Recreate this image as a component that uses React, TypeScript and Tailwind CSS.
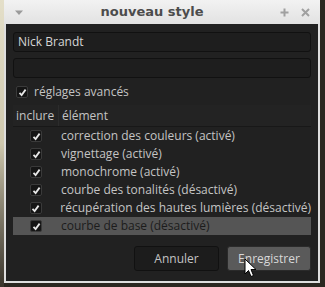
import React from 'react';

const rows = [
  'correction des couleurs (activé)',
  'vignettage (activé)',
  'monochrome (activé)',
  'courbe des tonalités (désactivé)',
  'récupération des hautes lumières (désactivé)',
  'courbe de base (désactivé)',
];

const Check = () => (
  <span className="flex h-[12px] w-[12px] items-center justify-center rounded-[2px] border border-[#3a3a3a] bg-[#151515]">
    <svg width="9" height="9" viewBox="0 0 9 9">
      <path d="M1.5 4.8 L3.6 7 L7.6 1.6" fill="none" stroke="#e8e8e8" strokeWidth="1.8" />
    </svg>
  </span>
);

export default function App() {
  return (
    <div
      className="flex h-[287px] w-[325px] bg-[#2b2720]"
      style={{ fontFamily: '"Open Sans", "Noto Sans", sans-serif' }}
    >
      {/* desktop strip */}
      <div className="w-[4px] bg-gradient-to-b from-[#e4dfc9] via-[#cfc8ae] to-[#3a352c]" />

      {/* window */}
      <div className="flex h-[283px] w-[316px] flex-col bg-[#dedede]">
        <div className="relative flex h-[24px] items-center bg-gradient-to-b from-[#f2f2f2] to-[#e2e2e2] px-[10px]">
          <svg width="10" height="6" viewBox="0 0 10 6" className="mt-[1px]">
            <path d="M1 0.5 L9 0.5 L5 5 Z" fill="#9a9a9a" />
          </svg>
          <span
            className="absolute left-0 right-[20px] text-center text-[13px] font-bold text-[#4c4c4c]"
            style={{ fontFamily: '"DejaVu Sans", sans-serif' }}
          >
            nouveau style
          </span>
          <div className="ml-auto flex items-center gap-[12px]">
            <svg width="9" height="9" viewBox="0 0 9 9">
              <path d="M4.5 0.5 V8.5 M0.5 4.5 H8.5" stroke="#a0a0a0" strokeWidth="2" />
            </svg>
            <svg width="9" height="9" viewBox="0 0 9 9">
              <path d="M1 1 L8 8 M8 1 L1 8" stroke="#a0a0a0" strokeWidth="2" />
            </svg>
          </div>
        </div>

        <div className="mx-[2px] mb-[2px] flex flex-1 flex-col bg-[#212121] px-[7px] pt-[8px] text-[12px] text-[#c4c4c4]">
          <div className="flex h-[20px] items-center rounded-[3px] border border-[#111111] bg-[#1e1e1e] px-[4px] text-[#d6d6d6]">
            Nick Brandt
          </div>
          <div className="mt-[6px] h-[20px] rounded-[3px] border border-[#111111] bg-[#1e1e1e]" />

          <div className="mt-[7px] flex h-[14px] items-center gap-[6px] pl-[3px]">
            <Check />
            <span>réglages avancés</span>
          </div>

          <div className="mt-[6px] flex h-[22px] items-center border-b border-[#181818] bg-[#232323]">
            <span className="w-[45px] pl-[3px]">inclure</span>
            <span className="h-full border-l border-[#2c2c2c] pl-[3px] leading-[21px]">élément</span>
          </div>

          <div className="flex flex-col">
            {rows.map((r, i) => {
              const sel = i === rows.length - 1;
              return (
                <div
                  key={r}
                  className={`flex h-[18px] items-center ${sel ? 'bg-[#555555] text-[#1c1c1c]' : ''}`}
                >
                  <span className="flex w-[48px] justify-center pr-[2px]">
                    <Check />
                  </span>
                  <span className="whitespace-nowrap">{r}</span>
                </div>
              );
            })}
          </div>

          <div className="mt-[11px] flex justify-end gap-[8px]">
            <button className="h-[25px] w-[85px] rounded-[3px] border border-[#111111] bg-[#1c1c1c] text-[12px] text-[#c4c4c4]">
              Annuler
            </button>
            <button className="relative h-[25px] w-[84px] rounded-[3px] border border-[#2a2a2a] bg-[#5a5a5a] text-[12px] text-[#d8d8d8]">
              Enregistrer
              <svg
                width="14"
                height="20"
                viewBox="0 0 14 20"
                className="absolute left-[16px] top-[11px]"
              >
                <path d="M1 1 L1 16 L4.5 12.5 L7 18.5 L9.5 17.5 L7 11.5 L12 11.5 Z" fill="#ffffff" stroke="#000000" strokeWidth="1" />
              </svg>
            </button>
          </div>
        </div>
      </div>
      <div className="flex-1" />
    </div>
  );
}
